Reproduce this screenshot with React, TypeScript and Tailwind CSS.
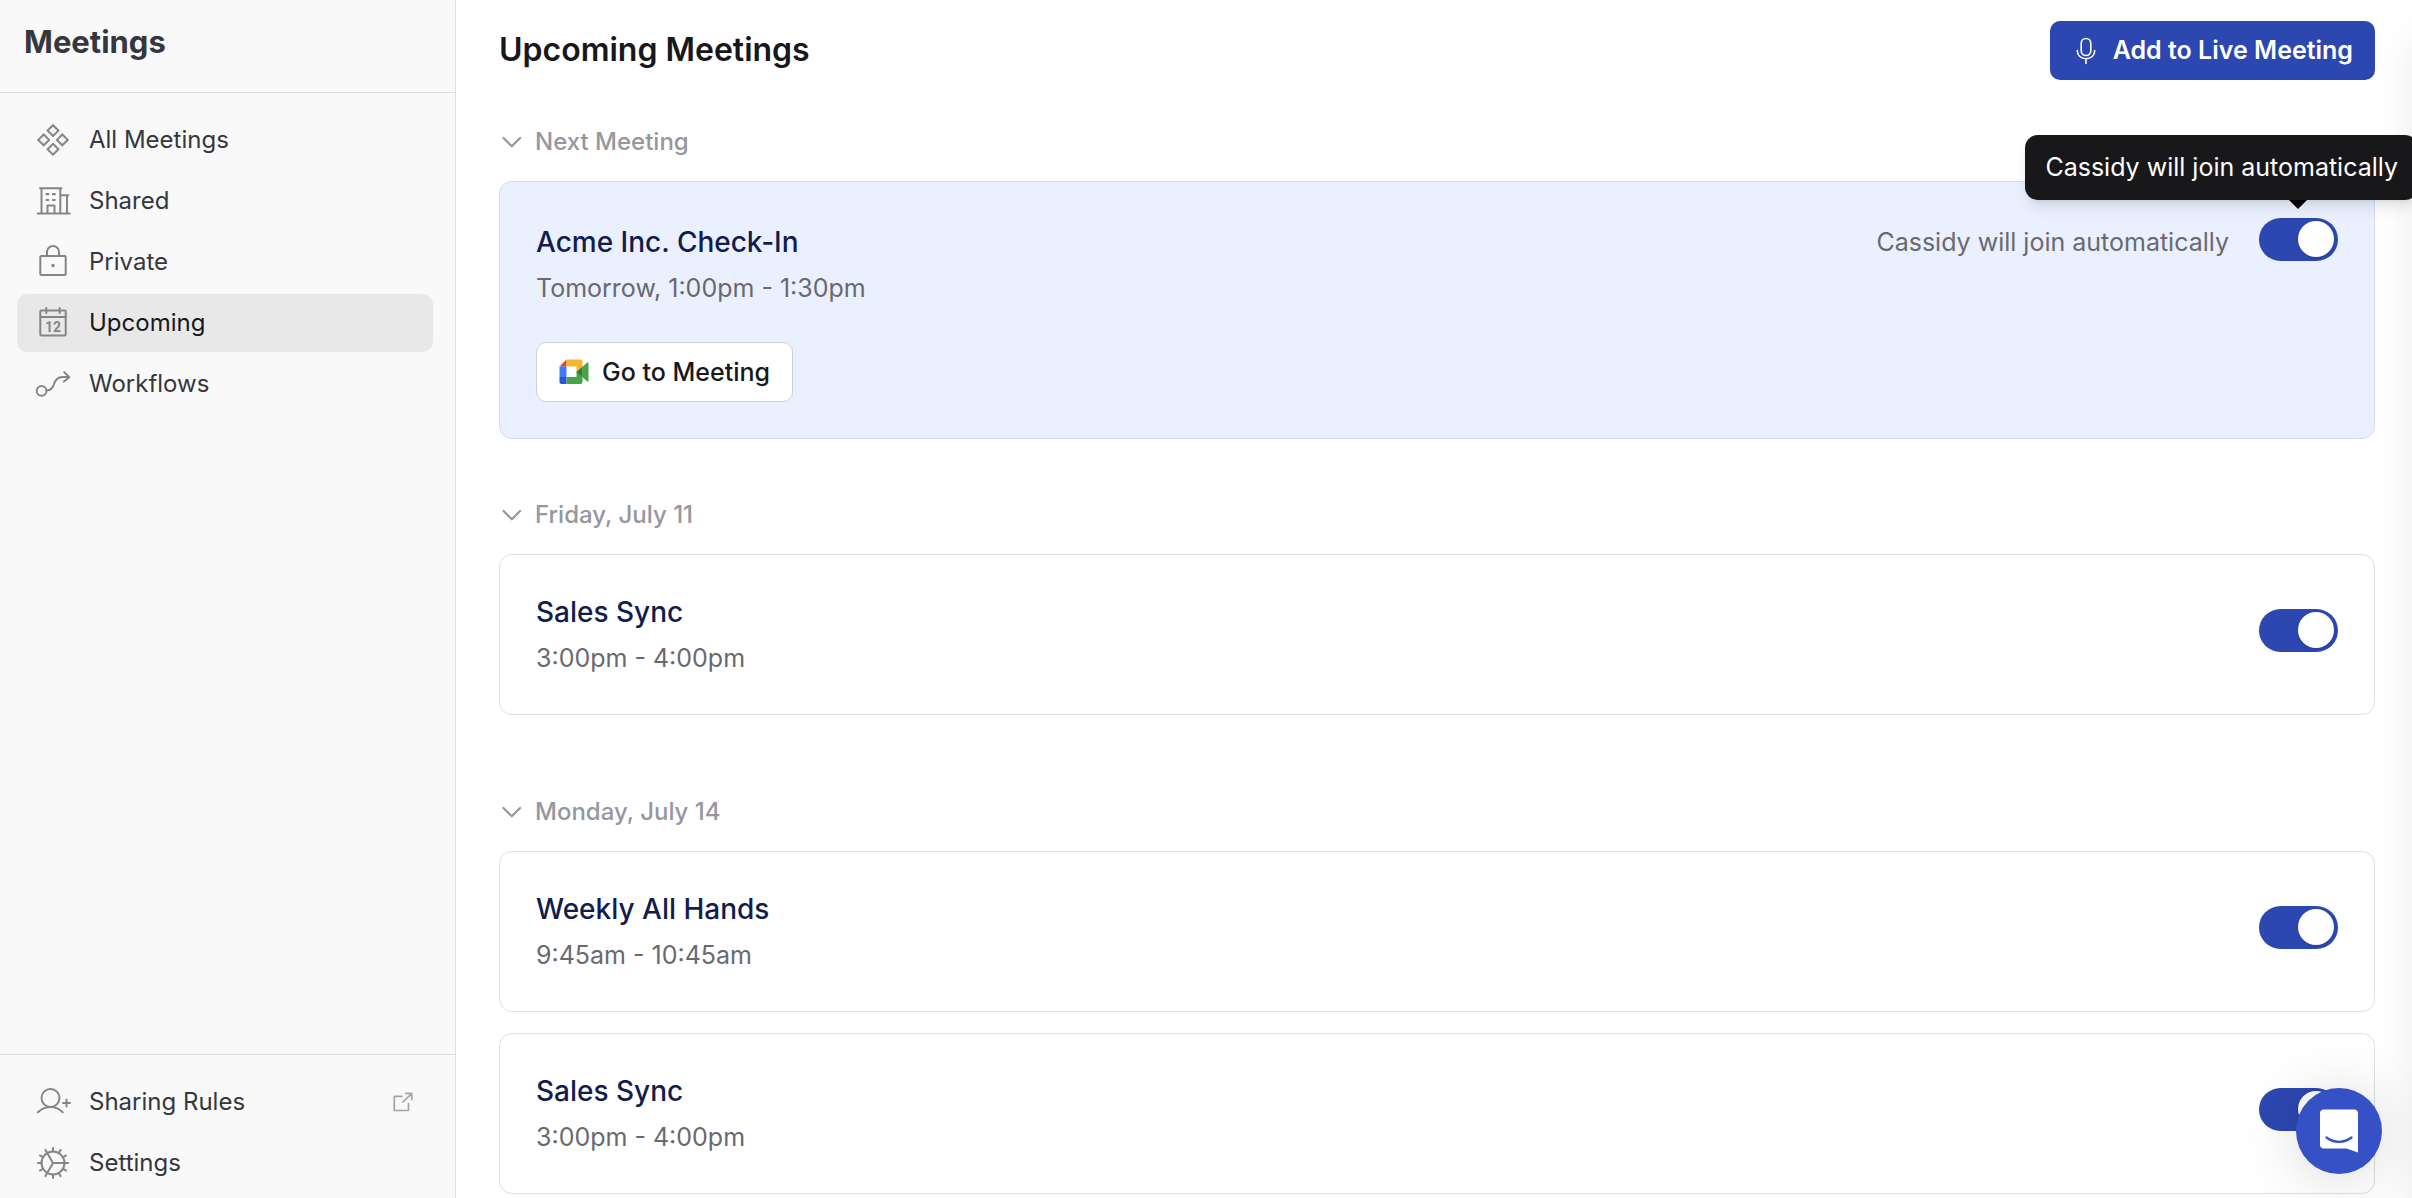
import React, { useState } from "react";

type IconProps = { children: React.ReactNode };

function NavIcon({ children }: IconProps) {
  return (
    <svg
      viewBox="0 0 36 36"
      className="size-9 shrink-0 text-[#858585]"
      fill="none"
      stroke="currentColor"
      strokeWidth="2"
      strokeLinecap="round"
      strokeLinejoin="round"
      aria-hidden="true"
    >
      {children}
    </svg>
  );
}

const DiamondsIcon = () => (
  <NavIcon>
    <path d="M18 3.2l5.4 5.4-5.4 5.4-5.4-5.4zM18 21.8l5.4 5.4-5.4 5.4-5.4-5.4zM8.7 12.5l5.4 5.4-5.4 5.4-5.4-5.4zM27.3 12.5l5.4 5.4-5.4 5.4-5.4-5.4z" strokeLinejoin="miter" />
  </NavIcon>
);

const BuildingIcon = () => (
  <NavIcon>
    <path d="M2.8 30.5h32M5 5.3h21.5M6.5 5.5v25M25.3 5.5v25M25.3 12.3h8M32 12.5v18M12.5 30.3v-7.8h7v7.8" />
    <path d="M11.5 11.2h1.8M18 11.2h1.8M11.5 17h1.8M18 17h1.8" strokeWidth="2.2" />
  </NavIcon>
);

const LockIcon = () => (
  <NavIcon>
    <rect x="5.3" y="12" width="25.4" height="19" rx="1" />
    <path d="M12 12V8a6 6 0 0 1 12 0v4" />
    <circle cx="18" cy="21.5" r="1.7" fill="currentColor" stroke="none" />
  </NavIcon>
);

const CalendarIcon = () => (
  <NavIcon>
    <rect x="5.3" y="5.5" width="25.4" height="25" rx="1" />
    <path d="M5.3 12h25.4M11.3 3v5M24.7 3v5" />
    <text
      x="18"
      y="26.8"
      textAnchor="middle"
      className="font-['Roboto',sans-serif] text-[14px] font-bold"
      fill="currentColor"
      stroke="none"
    >
      12
    </text>
  </NavIcon>
);

const WorkflowIcon = () => (
  <NavIcon>
    <circle cx="6.6" cy="24.8" r="4.9" />
    <path d="M11.5 24.4c4.2 0 6.2-1.8 7.5-6.1 1.4-4.9 3.6-7.3 8.5-7.3h6.5M29.3 6.3l5 4.9-5.3 4.4" />
  </NavIcon>
);

const UserPlusIcon = () => (
  <NavIcon>
    <circle cx="15.5" cy="14" r="9" />
    <path d="M2.9 28.3c3.3-3.4 7.7-5.3 12.6-5.3s9.1 1.9 12.2 5.3M31.5 15.6v7M28 19.1h7" />
  </NavIcon>
);

const GearIcon = () => (
  <NavIcon>
    <circle cx="18" cy="18" r="11.5" />
    {[0, 30, 60, 90, 120, 150, 180, 210, 240, 270, 300, 330].map((a) => (
      <path key={a} d="M29.5 18h3.6" transform={`rotate(${a} 18 18)`} />
    ))}
    <path d="M18 18h11.5M18 18l-5.75-9.96M18 18l-5.75 9.96" />
  </NavIcon>
);

const ExternalIcon = () => (
  <svg viewBox="0 0 20 20" className="size-5 text-[#a3a3ab]" fill="none" stroke="currentColor" strokeWidth="1.7" strokeLinecap="round" strokeLinejoin="round" aria-hidden="true">
    <path d="M9 4.3H1.3v14.2h14.2v-7M10 10l8.7-8.7M12.5 1.3h6.2v6.2" />
  </svg>
);

const MicIcon = () => (
  <svg viewBox="0 0 20 28" className="h-7 w-5" fill="none" stroke="currentColor" strokeWidth="1.6" strokeLinecap="round" aria-hidden="true">
    <rect x="5.2" y="1.5" width="9.6" height="17" rx="4.8" />
    <path d="M1.3 13.5c0 5 3.7 8.3 8.7 8.3s8.7-3.3 8.7-8.3M10 22v4.5" />
  </svg>
);

const MeetIcon = () => (
  <svg viewBox="0 0 30 26" className="h-[26px] w-[30px]" aria-hidden="true">
    <path d="M7.5.5v7H.5z" fill="#e04134" />
    <path d="M7.5.5h14a2 2 0 0 1 2 2V8l-6 5V7.5h-10z" fill="#f6b52c" />
    <path d="M.5 7.5h7V18h-7z" fill="#4079f3" />
    <path d="M.5 18h7v7h-5a2 2 0 0 1-2-2z" fill="#2458ce" />
    <path d="M7.5 18h10v-5l6 5v5a2 2 0 0 1-2 2h-14z" fill="#46a34a" />
    <path d="M17.3 13l6.4-5.5v11z" fill="#2f7d32" />
    <path d="M23.5 7.7l4.8-4.2q1.2-.7 1.2.7v17.6q0 1.4-1.2.7l-4.8-4.2z" fill="#46a34a" />
  </svg>
);

const ChevronIcon = ({ open }: { open: boolean }) => (
  <svg viewBox="0 0 24 24" className={open ? "size-6" : "size-6 -rotate-90"} fill="none" stroke="currentColor" strokeWidth="2.2" strokeLinecap="round" strokeLinejoin="round" aria-hidden="true">
    <path d="M4.5 8l8.3 8.3L21.1 8" />
  </svg>
);

type NavItemProps = {
  icon: React.ReactNode;
  label: string;
  active?: boolean;
  external?: boolean;
};

function NavItem({ icon, label, active, external }: NavItemProps) {
  return (
    <a
      href="#"
      aria-current={active ? "page" : undefined}
      className={
        active
          ? "flex h-[58px] items-center gap-[18px] rounded-[10px] bg-[#e8e8e8] pr-5 pl-[18px] text-[#18181b]"
          : "flex h-[58px] items-center gap-[18px] rounded-[10px] pr-5 pl-[18px] text-[#36363d]"
      }
    >
      {icon}
      <span className="grow">{label}</span>
      {external && <ExternalIcon />}
    </a>
  );
}

function Toggle({ label }: { label: string }) {
  const [on, setOn] = useState(true);
  return (
    <input
      type="checkbox"
      role="switch"
      aria-label={label}
      checked={on}
      onChange={() => setOn(!on)}
      className="block h-[43px] w-[79px] cursor-pointer appearance-none rounded-full bg-zinc-300 p-[3px] before:block before:size-9 before:rounded-full before:bg-white before:shadow-sm checked:bg-[#2c47b0] checked:before:ml-9"
    />
  );
}

function Section({ title, children }: { title: string; children: React.ReactNode }) {
  const [open, setOpen] = useState(true);
  return (
    <section>
      <h2 className="font-medium text-[#96969f]">
        <button
          type="button"
          aria-expanded={open}
          onClick={() => setOpen(!open)}
          className="flex h-8 items-center gap-3"
        >
          <ChevronIcon open={open} />
          {title}
        </button>
      </h2>
      {open && <div className="mt-[23px] flex flex-col gap-[21px]">{children}</div>}
    </section>
  );
}

function MeetingCard({ title, time }: { title: string; time: string }) {
  return (
    <article className="flex items-start justify-between rounded-[13px] border border-[#dfdfe2] bg-white px-9 pt-[37px] pb-9">
      <div>
        <h3 className="text-[28px] leading-10 font-medium text-[#131d4d]">{title}</h3>
        <p className="mt-1.5 text-[25px] leading-10 text-[#696970]">{time}</p>
      </div>
      <div className="pt-[17px]">
        <Toggle label={`Join ${title}`} />
      </div>
    </article>
  );
}

export default function App() {
  return (
    <div className="flex h-screen overflow-hidden bg-white font-['Inter',sans-serif] text-[24px] leading-8">
      <aside className="flex w-[456px] shrink-0 flex-col border-r border-[#dedfe3] bg-[#f9f9f9]">
        <div className="flex h-[93px] items-start border-b border-[#dedfe3] px-6 pt-[22px]">
          <div className="text-[31px] leading-10 font-bold text-[#36363d]">Meetings</div>
        </div>
        <nav aria-label="Meetings" className="flex grow flex-col gap-[3px] pt-[18px] pr-[22px] pl-[17px]">
          <NavItem icon={<DiamondsIcon />} label="All Meetings" />
          <NavItem icon={<BuildingIcon />} label="Shared" />
          <NavItem icon={<LockIcon />} label="Private" />
          <NavItem icon={<CalendarIcon />} label="Upcoming" active />
          <NavItem icon={<WorkflowIcon />} label="Workflows" />
        </nav>
        <nav aria-label="Preferences" className="flex flex-col gap-[3px] border-t border-[#dedfe3] pt-[18px] pr-[22px] pb-1.5 pl-[17px]">
          <NavItem icon={<UserPlusIcon />} label="Sharing Rules" external />
          <NavItem icon={<GearIcon />} label="Settings" />
        </nav>
      </aside>

      <main className="relative grow overflow-hidden pr-[37px] pl-[43px]">
        <header className="flex items-start justify-between pt-[21px]">
          <h1 className="pt-[9px] text-[32px] leading-10 font-semibold text-[#18181b]">Upcoming Meetings</h1>
          <button type="button" className="flex h-[59px] items-center gap-[17px] rounded-[10px] bg-[#2c47b0] pr-[22px] pl-[26px] text-[25px] font-semibold text-white">
            <MicIcon />
            <span className="pb-0.5">Add to Live Meeting</span>
          </button>
        </header>

        <div className="mt-[46px] flex flex-col gap-[60px]">
          <Section title="Next Meeting">
            <article className="flex items-start justify-between rounded-[13px] border border-[#d0dbf7] bg-[#eaf0fd] p-9">
              <div>
                <h3 className="pt-1 text-[28px] leading-10 font-medium text-[#131d4d]">Acme Inc. Check-In</h3>
                <p className="mt-1.5 text-[25px] leading-10 text-[#696970]">Tomorrow, 1:00pm - 1:30pm</p>
                <a href="#" className="mt-[34px] flex h-[60px] w-fit items-center gap-[13px] rounded-[10px] border border-[#cfcfd4] bg-white px-[22px] text-[25px] font-medium text-[#18181b]">
                  <MeetIcon />
                  Go to Meeting
                </a>
              </div>
              <div className="flex items-start gap-[30px]">
                <span className="pt-2 text-[25px] text-[#696970]">Cassidy will join automatically</span>
                <div className="relative">
                  <Toggle label="Cassidy will join automatically" />
                  <div
                    role="tooltip"
                    className="absolute -right-20 bottom-full z-10 mb-[18px] flex h-[65px] items-center rounded-[13px] bg-[#18181b] px-5 pb-0.5 text-[25px] whitespace-nowrap text-white shadow-lg"
                  >
                    Cassidy will join automatically
                  </div>
                  <svg viewBox="0 0 18 9" className="absolute bottom-full left-[30px] z-10 mb-[9px] h-[9px] w-[18px]" aria-hidden="true">
                    <path d="M0 0h18L9 9z" fill="#000" />
                  </svg>
                </div>
              </div>
            </article>
          </Section>

          <Section title="Friday, July 11">
            <MeetingCard title="Sales Sync" time="3:00pm - 4:00pm" />
          </Section>

          <div className="mt-[21px]">
            <Section title="Monday, July 14">
              <MeetingCard title="Weekly All Hands" time="9:45am - 10:45am" />
              <MeetingCard title="Sales Sync" time="3:00pm - 4:00pm" />
            </Section>
          </div>
        </div>

        <div className="pointer-events-none absolute top-0 -right-20 bottom-0 w-20 shadow-[0_40px_40px_rgba(0,0,0,0.08)]" />
      </main>

      <button
        type="button"
        aria-label="Open chat"
        className="fixed right-[30px] bottom-6 flex size-[86px] items-center justify-center rounded-full bg-[#3651c5] shadow-[0_4px_60px_rgba(0,0,0,0.16)]"
      >
        <svg viewBox="0 0 40 44" className="h-11 w-10" aria-hidden="true">
          <path d="M5 .5h30a4 4 0 0 1 4 4v39l-11.5-4H5a4 4 0 0 1-4-4v-31a4 4 0 0 1 4-4z" fill="#fff" />
          <path d="M7.5 28.5c7.5 5.7 17.5 5.7 25 0" fill="none" stroke="#3651c5" strokeWidth="2.3" strokeLinecap="round" />
        </svg>
      </button>
    </div>
  );
}
